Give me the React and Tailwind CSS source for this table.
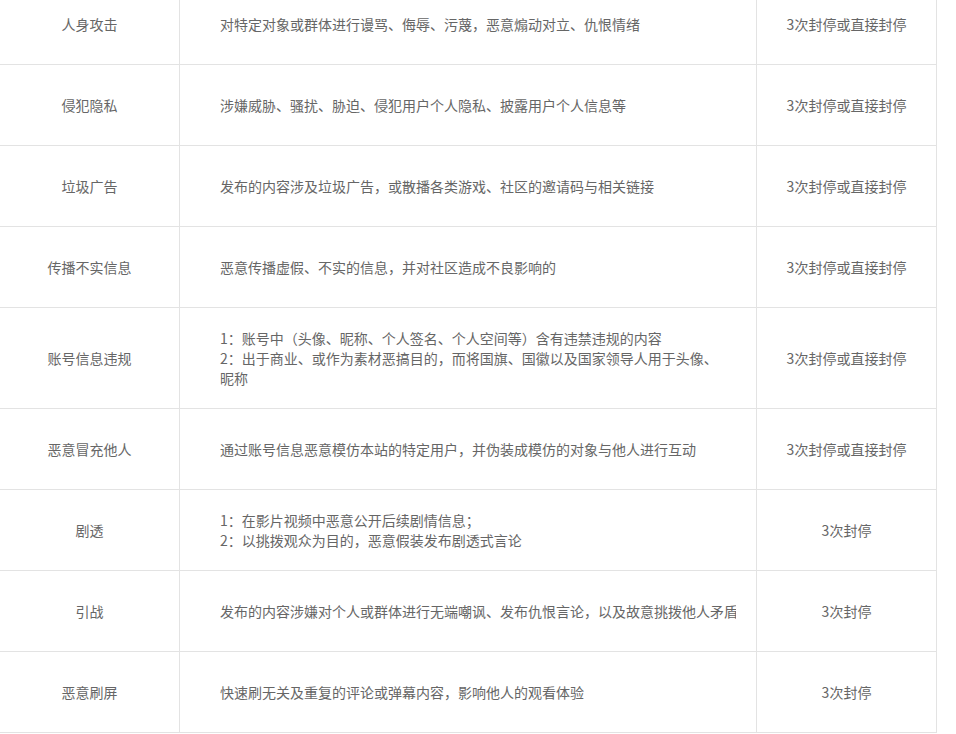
import React from "react";

const rules = [
  {
    type: "人身攻击",
    desc: ["对特定对象或群体进行谩骂、侮辱、污蔑，恶意煽动对立、仇恨情绪"],
    penalty: "3次封停或直接封停",
  },
  {
    type: "侵犯隐私",
    desc: ["涉嫌威胁、骚扰、胁迫、侵犯用户个人隐私、披露用户个人信息等"],
    penalty: "3次封停或直接封停",
  },
  {
    type: "垃圾广告",
    desc: ["发布的内容涉及垃圾广告，或散播各类游戏、社区的邀请码与相关链接"],
    penalty: "3次封停或直接封停",
  },
  {
    type: "传播不实信息",
    desc: ["恶意传播虚假、不实的信息，并对社区造成不良影响的"],
    penalty: "3次封停或直接封停",
  },
  {
    type: "账号信息违规",
    desc: [
      "1：账号中（头像、昵称、个人签名、个人空间等）含有违禁违规的内容",
      "2：出于商业、或作为素材恶搞目的，而将国旗、国徽以及国家领导人用于头像、昵称",
    ],
    penalty: "3次封停或直接封停",
    tall: true,
  },
  {
    type: "恶意冒充他人",
    desc: ["通过账号信息恶意模仿本站的特定用户，并伪装成模仿的对象与他人进行互动"],
    penalty: "3次封停或直接封停",
  },
  {
    type: "剧透",
    desc: ["1：在影片视频中恶意公开后续剧情信息；", "2：以挑拨观众为目的，恶意假装发布剧透式言论"],
    penalty: "3次封停",
  },
  {
    type: "引战",
    desc: ["发布的内容涉嫌对个人或群体进行无端嘲讽、发布仇恨言论，以及故意挑拨他人矛盾"],
    penalty: "3次封停",
    clip: true,
  },
  {
    type: "恶意刷屏",
    desc: ["快速刷无关及重复的评论或弹幕内容，影响他人的观看体验"],
    penalty: "3次封停",
  },
];

const App = () => {
  return (
    <div
      className="h-[734px] overflow-hidden bg-white text-[14px] leading-[20px] text-[#666]"
      style={{ fontFamily: '"Microsoft YaHei", "Noto Sans CJK SC", sans-serif' }}
    >
      <div className="-mt-[16px] grid w-[937px] grid-cols-[180px_577px_180px]">
        {rules.map((rule) => (
          <React.Fragment key={rule.type}>
            <div
              className={`flex items-center justify-center border-r border-b border-[#e3e3e3] ${
                rule.tall ? "h-[101px]" : "h-[81px]"
              }`}
            >
              {rule.type}
            </div>
            <div className="flex items-center border-r border-b border-[#e3e3e3] pl-[40px] pr-[20px]">
              <div
                className={
                  rule.clip ? "w-full overflow-hidden whitespace-nowrap" : "w-full break-keep"
                }
              >
                {rule.desc.map((line) => (
                  <div key={line}>{line}</div>
                ))}
              </div>
            </div>
            <div className="flex items-center justify-center border-r border-b border-[#e3e3e3]">
              {rule.penalty}
            </div>
          </React.Fragment>
        ))}
      </div>
    </div>
  );
};

export default App;
